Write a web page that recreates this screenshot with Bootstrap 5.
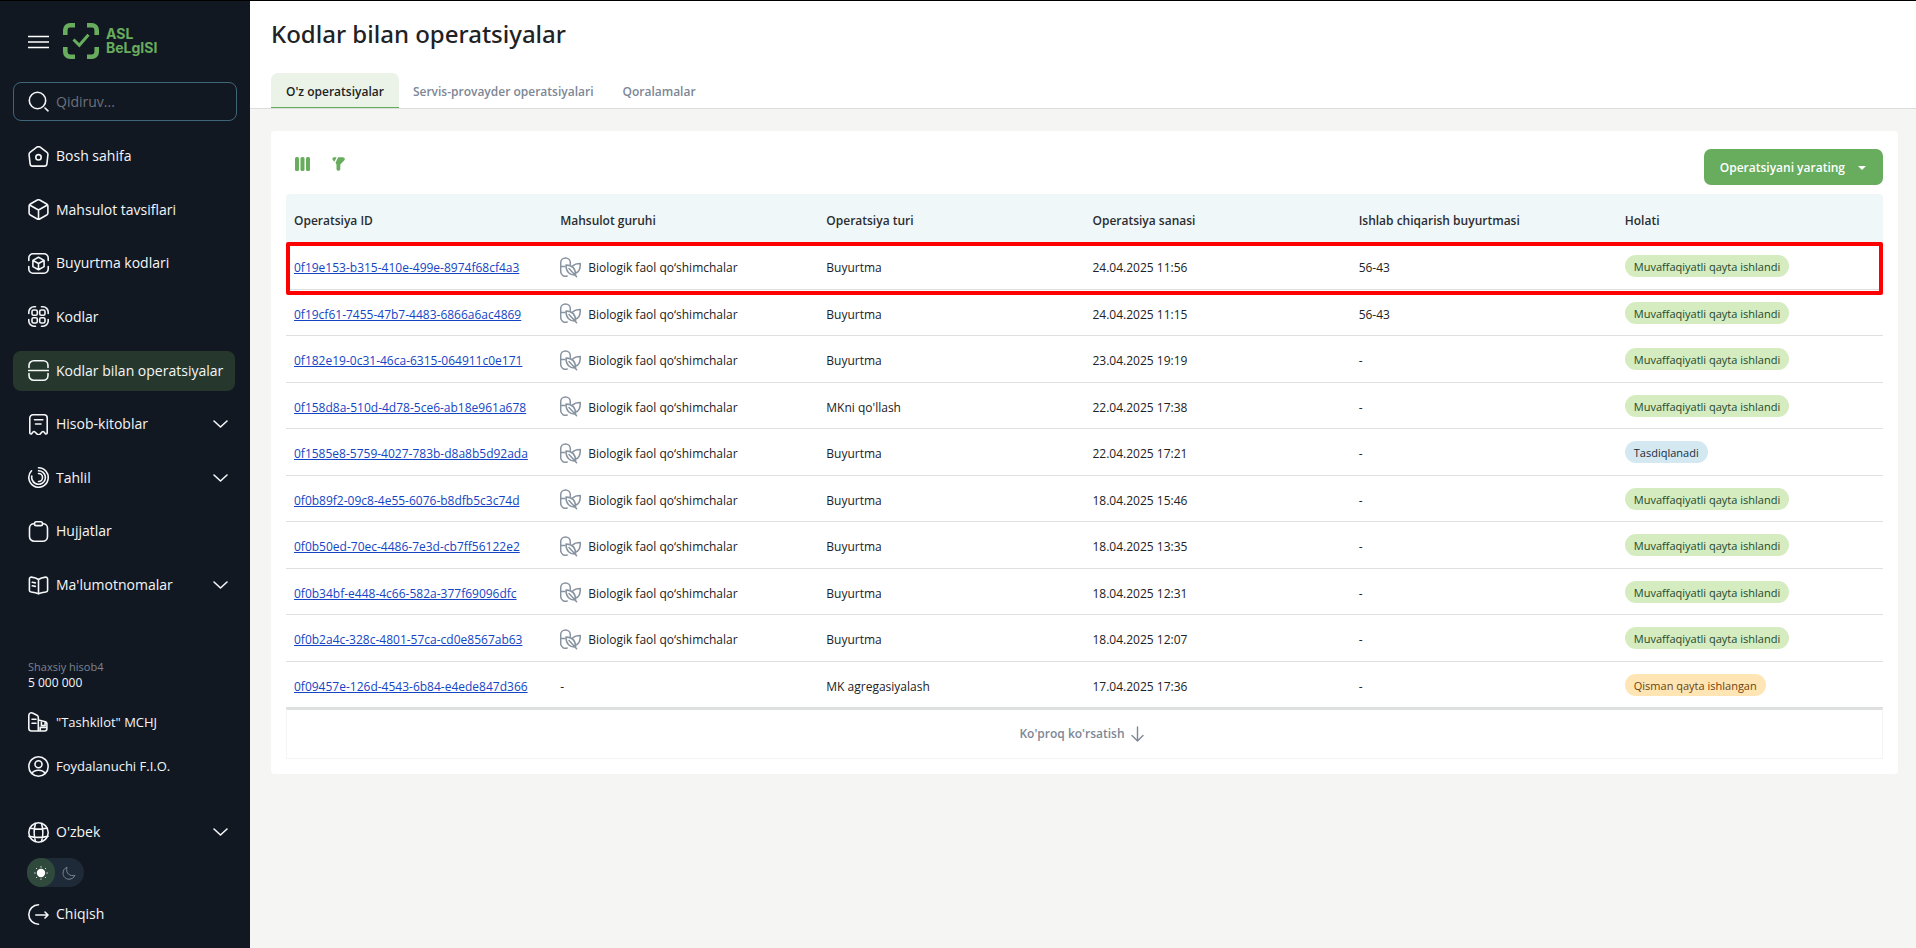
<!DOCTYPE html>
<html lang="uz">
<head>
<meta charset="utf-8">
<meta name="viewport" content="width=device-width, initial-scale=1">
<title>Kodlar bilan operatsiyalar</title>
<link href="https://cdn.jsdelivr.net/npm/bootstrap@5.3.0/dist/css/bootstrap.min.css" rel="stylesheet">
<style>
:root{--green:#68ac5e;--night:#121822;--muted:#7d8796}
body{font:12px/16px "Open Sans","Noto Sans",sans-serif;color:#212224;background:#f5f5f4}
.topline{height:1px;background:#000}
.shell{min-height:calc(100vh - 1px)}
.sidebar{width:250px;background:var(--night);color:#f4f6f8;padding:22px 13px 14px}
.brand-row{padding-left:15px;gap:14px;height:36px}
.brand-link{color:var(--green);gap:7px}
.brand-text{font:700 14px/14px Inter,sans-serif}
.search-box{height:39px;margin-top:23px;border:1px solid #3f6579;border-radius:8px;padding-left:14px;gap:7px}
.search-box input{font-size:14px;line-height:20px;color:#fff;outline:0;min-width:0}
.search-box input::placeholder{color:#6b717b;opacity:1}
.side-nav{margin-top:15px}
.side-item{height:40px;margin-right:2px;padding:0 7px 0 15px;gap:7px;border-radius:8px;color:inherit;text-decoration:none;font-size:14px;line-height:20px;text-align:left}
.side-item.active{background:#26382d}
.side-item.compact{font-size:13px}
.side-item.language{margin-top:26px}
.ico{width:21px;height:21px;flex:none;fill:none;stroke:currentColor;stroke-width:1.6;stroke-linecap:round;stroke-linejoin:round}
.chev{width:15px;height:8px;margin-left:auto;flex:none;fill:none;stroke:currentColor;stroke-width:1.6;stroke-linecap:round;stroke-linejoin:round}
.account{padding:54px 0 11px 15px}
.account small{font-size:11px;color:#7a8492;display:block;line-height:16px}
.theme-switch{width:57px;height:29px;margin:6px 0 7px 14px;background:#1e2a37;border-radius:15px}
.theme-switch label{width:28px;height:29px;border-radius:14px;color:#7d8796;cursor:pointer}
.theme-switch .btn-check:checked+label{background:#2f4a3c;color:#fff}
.page-head{height:108px;background:#fff;border-bottom:1px solid #dcdddd;padding:13px 21px 0}
.page-head h1{font:500 24px/40px "Noto Sans",sans-serif;margin:0;color:#212224}
.tab-link{height:35px;padding:4px 15px 0;margin-right:-1px;font-weight:600;color:var(--muted);text-decoration:none;border-radius:7px 7px 0 0;border-bottom:1px solid transparent}
.tab-link.active{color:#212224;background:#ebf3e9;border-color:var(--green)}
.panel{margin:22px 18px 0 21px;background:#fff;border-radius:4px;padding:18px 15px 15px}
.tool{border:0;background:none;padding:0;line-height:0;color:var(--green)}
.tool-list{padding:8px 0 0 9px;gap:21px}
.btn-make{--bs-btn-bg:#68ac5e;--bs-btn-color:#fff;--bs-btn-hover-bg:#5c9d53;--bs-btn-hover-color:#fff;height:36px;font-size:12px;font-weight:600;border:0;border-radius:7px;padding:1px 17px 0 16px;gap:13px}
.btn-make::after{margin:0;border-width:4px 4px 0}
.ops{table-layout:fixed;margin-top:9px;width:100%;border-collapse:separate;border-spacing:0}
.ops th,.ops td{padding:4px 8px 0;vertical-align:middle}
.ops th{height:49px;background:#eff7f9;font-weight:600;color:#2b2d30;padding-top:5px}
.ops th:first-child{border-radius:4px 0 0}
.ops th:last-child{border-radius:0 4px 0 0}
.ops td{height:47px;border-bottom:1px solid #dedfdf}
.ops tr:nth-child(even) td{height:46px}
.ops a{color:#1545c4}
.group-cell{gap:7px}
.group-cell svg{width:21px;height:21px;flex:none;color:#8893a0;margin-bottom:2px}
.picked{position:relative}
.frame{position:absolute;inset:-1px 0 -5px;border:4px solid #f00;border-radius:2px;pointer-events:none}
.pill{display:inline-block;height:22px;border-radius:11px;padding:1px 9px 0;font-size:11px;line-height:21px;background:#d5ebc0;color:#1d4a2c;vertical-align:middle;margin-bottom:4px}
.pill.info{background:#d4e8f2;color:#212c38}
.pill.part{background:#ffe5b4;color:#6b430c}
.more{height:51px;border:1px solid #f4f4f4;border-top:2px solid #dedfdf;background:#fff;font-weight:600;color:var(--muted);gap:6px;padding:0 12px 0 6px}
</style>
</head>
<body>
<svg class="d-none">
<symbol id="supplement" viewBox="0 0 21 21"><g fill="none" stroke="currentColor" stroke-width="1.5" stroke-linecap="round" stroke-linejoin="round"><path d="M10.300 7.600V5.700a4.800 4.800 0 0 0-9.600 0v9.100a4.800 4.800 0 0 0 6.500 4.200M.8 9.600h4"/><path d="M6 8c5.500.1 9.700 3.200 9.600 10.300C9.800 18.400 5.900 14.800 6 8zM9 11.500l7.600 8.200"/><path d="M12.300 9.200c2.200-2.100 4.800-2.700 8-2.700.1 5-1.300 8.800-4.900 9.600"/></g></symbol>
<symbol id="down" viewBox="0 0 15 8"><path d="M1 1l6.500 6L14 1"/></symbol>
</svg>
<div class="topline"></div>
<div class="shell d-flex">
<aside class="sidebar d-flex flex-column flex-shrink-0">
  <div class="brand-row d-flex align-items-center">
    <button class="btn p-0 border-0 text-white lh-1" type="button" aria-label="Menyu"><svg width="21" height="14" stroke="currentColor" stroke-width="1.600"><path d="M0 1.500h21M0 7h21M0 12.500h21"/></svg></button>
    <a href="#" class="brand-link d-flex align-items-center text-decoration-none">
      <svg width="36" height="36" fill="none" stroke="currentColor" stroke-width="4.600"><path d="M2.300 12V7a4.700 4.700 0 0 1 4.700-4.700h5M24 2.300h5A4.700 4.700 0 0 1 33.700 7v5M33.700 24v5a4.700 4.700 0 0 1-4.700 4.700h-5M12 33.700H7A4.700 4.700 0 0 1 2.300 29v-5"/><path stroke-width="3" d="M10.500 16.500l5.800 5.700 9.200-10.400"/></svg>
      <span class="brand-text">ASL<br>BeLgISI</span>
    </a>
  </div>
  <label class="search-box d-flex align-items-center">
    <svg class="ico" viewBox="0 0 21 21"><circle cx="9.500" cy="9.500" r="8.200"/><path d="M17 17l3 2.800"/></svg>
    <input class="bg-transparent border-0 p-0 flex-grow-1" type="text" placeholder="Qidiruv..." aria-label="Qidiruv">
  </label>
  <nav class="side-nav d-flex flex-column flex-grow-1 justify-content-between">
    <a href="#" class="side-item d-flex align-items-center"><svg class="ico" viewBox="0 0 21 21"><path d="M8.800 1.200a3 3 0 0 1 3.400 0l6.500 4.900a3 3 0 0 1 1.200 2.900l-1 8.800a2.600 2.600 0 0 1-2.600 2.300H4.700a2.600 2.600 0 0 1-2.600-2.300L1.100 9a3 3 0 0 1 1.200-2.900z"/><circle cx="10.500" cy="11.300" r="2.700"/></svg>Bosh sahifa</a>
    <a href="#" class="side-item d-flex align-items-center"><svg class="ico" viewBox="0 0 21 21"><path d="M9.300 1a2.500 2.500 0 0 1 2.400 0l7 4a2.500 2.500 0 0 1 1.200 2.100v6.800a2.500 2.500 0 0 1-1.200 2.100l-7 4a2.500 2.500 0 0 1-2.400 0l-7-4a2.500 2.500 0 0 1-1.200-2.100V7.100A2.500 2.500 0 0 1 2.300 5zM1.600 6l8.900 5 8.900-5M10.500 11v9"/></svg>Mahsulot tavsiflari</a>
    <a href="#" class="side-item d-flex align-items-center"><svg class="ico" viewBox="0 0 21 21"><path d="M.8 7.500V5A4.200 4.200 0 0 1 5 .8h11A4.200 4.200 0 0 1 20.200 5v2.500M20.200 13.500V16a4.200 4.200 0 0 1-4.200 4.200H5A4.200 4.200 0 0 1 .8 16v-2.500"/><path d="M10.500 4.300l5.600 3.100v6.200l-5.600 3.100-5.600-3.100V7.400zM5 7.500l5.500 3 5.500-3M10.500 10.500v6"/></svg>Buyurtma kodlari</a>
    <a href="#" class="side-item d-flex align-items-center"><svg class="ico" viewBox="0 0 21 21"><path d="M.8 7.500V6A5.200 5.200 0 0 1 6 .8h1.500M13.500.8H15A5.200 5.200 0 0 1 20.200 6v1.500M20.200 13.500V15a5.200 5.200 0 0 1-5.200 5.200h-1.500M7.500 20.200H6A5.200 5.200 0 0 1 .8 15v-1.500"/><rect x="4" y="4" width="5.300" height="5.300" rx="1.600"/><rect x="11.700" y="4" width="5.300" height="5.300" rx="1.600"/><rect x="4" y="11.700" width="5.300" height="5.300" rx="1.600"/><rect x="11.700" y="11.700" width="5.300" height="5.300" rx="1.600"/></svg>Kodlar</a>
    <a href="#" class="side-item active d-flex align-items-center" aria-current="page"><svg class="ico" viewBox="0 0 21 21"><path d="M1 7.500V5.500A4.700 4.700 0 0 1 5.700.8h9.600A4.700 4.700 0 0 1 20 5.500v2M.6 10.500h19.800M1 13.500v2a4.700 4.700 0 0 0 4.700 4.700h9.600a4.700 4.700 0 0 0 4.700-4.700v-2"/></svg>Kodlar bilan operatsiyalar</a>
    <a href="#" class="side-item d-flex align-items-center"><svg class="ico" viewBox="0 0 21 21"><path d="M1.800 19.300V4A3.200 3.200 0 0 1 5 .8h11A3.200 3.200 0 0 1 19.200 4v15.300c-.4.900-1.500.9-2 .2l-1.200-1.500c-.6-.7-1.400-.7-2 0l-1.700 1.900c-.9.900-2.500.9-3.400 0L7 18c-.6-.7-1.400-.7-2 0l-1.200 1.500c-.5.700-1.600.7-2-.2zM6.500 5.800h8.300M7.500 10h5.500"/></svg>Hisob-kitoblar<svg class="chev"><use href="#down"/></svg></a>
    <a href="#" class="side-item d-flex align-items-center"><svg class="ico" viewBox="0 0 21 21"><path d="M10.500.8a9.700 9.700 0 1 1-7 3M10.500 3.700a6.800 6.800 0 1 1-6.300 9.200A7 7 0 0 1 3.800 9M10.500 6.500a4 4 0 0 1 0 8"/></svg>Tahlil<svg class="chev"><use href="#down"/></svg></a>
    <a href="#" class="side-item d-flex align-items-center"><svg class="ico" viewBox="0 0 21 21"><path d="M6.500 2.700H5.800a4.300 4.300 0 0 0-4.300 4.300v8.500a4.700 4.700 0 0 0 4.700 4.700h8.600a4.700 4.700 0 0 0 4.700-4.700V7a4.300 4.300 0 0 0-4.300-4.300h-.7"/><rect x="6.500" y=".8" width="8" height="3.800" rx="1.700"/></svg>Hujjatlar</a>
    <a href="#" class="side-item d-flex align-items-center"><svg class="ico" viewBox="0 0 21 21"><path d="M10.500 4.500v14.200M10.500 4.500C8.500 3 6.300 2.400 3.500 2.100a1.900 1.900 0 0 0-2.100 1.900v11.200c0 1 .7 1.700 1.700 1.800 2.900.3 5.400.7 7.400 1.900 2-1.200 4.500-1.600 7.400-1.900 1-.1 1.700-.8 1.700-1.800V4a1.900 1.900 0 0 0-2.100-1.900c-2.800.3-5 .9-7 2.400zM4.300 7.300l3 .6M4.300 10.800l3 .6"/></svg>Ma'lumotnomalar<svg class="chev"><use href="#down"/></svg></a>
  </nav>
  <div class="account"><small>Shaxsiy hisob4</small><div>5 000 000</div></div>
  <a href="#" class="side-item compact d-flex align-items-center"><svg class="ico" viewBox="0 0 21 21"><path d="M10.300 19V5.400c0-.9-.5-1.700-1.300-2.100L5 1.200C2.800.2.800 1.200.8 3.500v13A2.700 2.700 0 0 0 3.500 19h13.200a2.200 2.200 0 0 0 2.200-2.200v-5.200a2 2 0 0 0-1.400-1.900l-7-1.700M4 7.300h4M4 11.300h4M13.400 9v4.500h3.700V9.800M12.200 19v-3.600h5.500"/></svg>"Tashkilot" MCHJ</a>
  <a href="#" class="side-item compact mt-1 d-flex align-items-center"><svg class="ico" viewBox="0 0 21 21"><circle cx="10.500" cy="10.500" r="9.700"/><circle cx="10.500" cy="8.300" r="3.500"/><path d="M4 17.500c2-4.400 11-4.400 13 0"/></svg>Foydalanuchi F.I.O.</a>
  <button type="button" class="side-item language btn border-0 d-flex align-items-center"><svg class="ico" viewBox="0 0 21 21"><circle cx="10.500" cy="10.500" r="9.700"/><path d="M7.500 1.500c-1.700 5.600-1.700 12.400 0 18M13.500 1.500c1.700 5.600 1.700 12.400 0 18M2 6.300c5.300 1 11.700 1 17 0M1 14.200c6 1.500 13 1.500 19 0"/></svg>O'zbek<svg class="chev"><use href="#down"/></svg></button>
  <div class="theme-switch d-flex flex-shrink-0" role="group" aria-label="Mavzu">
    <input class="btn-check" type="radio" name="theme" id="light" checked><label for="light" class="d-flex align-items-center justify-content-center" aria-label="Yorug'"><svg width="14" height="14" viewBox="0 0 14 14"><circle cx="7" cy="7" r="4.200" fill="currentColor"/><path d="M7 .3v1.200M7 12.500v1.200M.3 7h1.200M12.500 7h1.200M2.200 2.200l.8.800M11 11l.8.800M11.800 2.200l-.8.800M3 11l-.8.800" stroke="currentColor"/></svg></label>
    <input class="btn-check" type="radio" name="theme" id="dark"><label for="dark" class="d-flex align-items-center justify-content-center" aria-label="Tungi"><svg width="14" height="14" viewBox="0 0 14 14" fill="none" stroke="currentColor"><path d="M5 1.300C2.600 2.200 1 4.400 1 7.200c0 3.400 2.700 6 6 6 2.800 0 5-1.600 6-3.900C8.500 10.800 3.200 7.500 5 1.300z"/></svg></label>
  </div>
  <a href="#" class="side-item d-flex align-items-center"><svg class="ico" viewBox="0 0 21 21"><path d="M10.500.8a9.700 9.700 0 0 0 0 19.400M7.800 11h12M17 8l3 3-3 3"/></svg>Chiqish</a>
</aside>
<main class="flex-grow-1" style="min-width:0">
  <header class="page-head d-flex flex-column justify-content-between">
    <h1>Kodlar bilan operatsiyalar</h1>
    <nav class="d-flex">
      <a href="#" class="tab-link active d-flex align-items-center" aria-current="page">O'z operatsiyalar</a>
      <a href="#" class="tab-link d-flex align-items-center">Servis-provayder operatsiyalari</a>
      <a href="#" class="tab-link d-flex align-items-center">Qoralamalar</a>
    </nav>
  </header>
  <section class="panel">
    <div class="d-flex justify-content-between align-items-start">
      <div class="tool-list d-flex">
        <button class="tool" type="button" aria-label="Ustunlar"><svg width="16" height="14" fill="currentColor"><rect width="4" height="14" rx="1.500"/><rect x="5.500" width="4" height="14" rx="1.500"/><rect x="11" width="4" height="14" rx="1.500"/></svg></button>
        <button class="tool" type="button" aria-label="Filtr"><svg width="14" height="14" fill="currentColor"><path d="M2 .2h2.700L2.400 4.800 1 3.300C-.2 2 .4.200 2 .2zM6.200.2h4.500c2 0 2.800 2 1.500 3.400L8.300 7.600V12c0 2.300-3.800 2.400-3.800 0V7.600L3.500 5.800z"/></svg></button>
      </div>
      <button type="button" class="btn btn-make dropdown-toggle d-flex align-items-center" data-bs-toggle="dropdown">Operatsiyani yarating</button>
    </div>
    <table class="ops">
      <thead><tr><th>Operatsiya ID</th><th>Mahsulot guruhi</th><th>Operatsiya turi</th><th>Operatsiya sanasi</th><th>Ishlab chiqarish buyurtmasi</th><th>Holati</th></tr></thead>
      <tbody>
        <tr class="picked"><td><span class="frame"></span><a href="#">0f19e153-b315-410e-499e-8974f68cf4a3</a></td><td><div class="group-cell d-flex align-items-center"><svg><use href="#supplement"/></svg>Biologik faol qo‘shimchalar</div></td><td>Buyurtma</td><td>24.04.2025 11:56</td><td>56-43</td><td><span class="pill">Muvaffaqiyatli qayta ishlandi</span></td></tr>
        <tr><td><a href="#">0f19cf61-7455-47b7-4483-6866a6ac4869</a></td><td><div class="group-cell d-flex align-items-center"><svg><use href="#supplement"/></svg>Biologik faol qo‘shimchalar</div></td><td>Buyurtma</td><td>24.04.2025 11:15</td><td>56-43</td><td><span class="pill">Muvaffaqiyatli qayta ishlandi</span></td></tr>
        <tr><td><a href="#">0f182e19-0c31-46ca-6315-064911c0e171</a></td><td><div class="group-cell d-flex align-items-center"><svg><use href="#supplement"/></svg>Biologik faol qo‘shimchalar</div></td><td>Buyurtma</td><td>23.04.2025 19:19</td><td>-</td><td><span class="pill">Muvaffaqiyatli qayta ishlandi</span></td></tr>
        <tr><td><a href="#">0f158d8a-510d-4d78-5ce6-ab18e961a678</a></td><td><div class="group-cell d-flex align-items-center"><svg><use href="#supplement"/></svg>Biologik faol qo‘shimchalar</div></td><td>MKni qo'llash</td><td>22.04.2025 17:38</td><td>-</td><td><span class="pill">Muvaffaqiyatli qayta ishlandi</span></td></tr>
        <tr><td><a href="#">0f1585e8-5759-4027-783b-d8a8b5d92ada</a></td><td><div class="group-cell d-flex align-items-center"><svg><use href="#supplement"/></svg>Biologik faol qo‘shimchalar</div></td><td>Buyurtma</td><td>22.04.2025 17:21</td><td>-</td><td><span class="pill info">Tasdiqlanadi</span></td></tr>
        <tr><td><a href="#">0f0b89f2-09c8-4e55-6076-b8dfb5c3c74d</a></td><td><div class="group-cell d-flex align-items-center"><svg><use href="#supplement"/></svg>Biologik faol qo‘shimchalar</div></td><td>Buyurtma</td><td>18.04.2025 15:46</td><td>-</td><td><span class="pill">Muvaffaqiyatli qayta ishlandi</span></td></tr>
        <tr><td><a href="#">0f0b50ed-70ec-4486-7e3d-cb7ff56122e2</a></td><td><div class="group-cell d-flex align-items-center"><svg><use href="#supplement"/></svg>Biologik faol qo‘shimchalar</div></td><td>Buyurtma</td><td>18.04.2025 13:35</td><td>-</td><td><span class="pill">Muvaffaqiyatli qayta ishlandi</span></td></tr>
        <tr><td><a href="#">0f0b34bf-e448-4c66-582a-377f69096dfc</a></td><td><div class="group-cell d-flex align-items-center"><svg><use href="#supplement"/></svg>Biologik faol qo‘shimchalar</div></td><td>Buyurtma</td><td>18.04.2025 12:31</td><td>-</td><td><span class="pill">Muvaffaqiyatli qayta ishlandi</span></td></tr>
        <tr><td><a href="#">0f0b2a4c-328c-4801-57ca-cd0e8567ab63</a></td><td><div class="group-cell d-flex align-items-center"><svg><use href="#supplement"/></svg>Biologik faol qo‘shimchalar</div></td><td>Buyurtma</td><td>18.04.2025 12:07</td><td>-</td><td><span class="pill">Muvaffaqiyatli qayta ishlandi</span></td></tr>
        <tr><td><a href="#">0f09457e-126d-4543-6b84-e4ede847d366</a></td><td>-</td><td>MK agregasiyalash</td><td>17.04.2025 17:36</td><td>-</td><td><span class="pill part">Qisman qayta ishlangan</span></td></tr>
      </tbody>
    </table>
    <button type="button" class="more w-100 d-flex align-items-center justify-content-center">Ko'proq ko'rsatish<svg width="13" height="16" fill="none" stroke="currentColor" stroke-width="1.400" stroke-linecap="round" stroke-linejoin="round"><path d="M6.500 1v14M1 9.500L6.500 15 12 9.500"/></svg></button>
  </section>
</main>
</div>
<script src="https://cdn.jsdelivr.net/npm/bootstrap@5.3.0/dist/js/bootstrap.bundle.min.js"></script>
</body>
</html>
